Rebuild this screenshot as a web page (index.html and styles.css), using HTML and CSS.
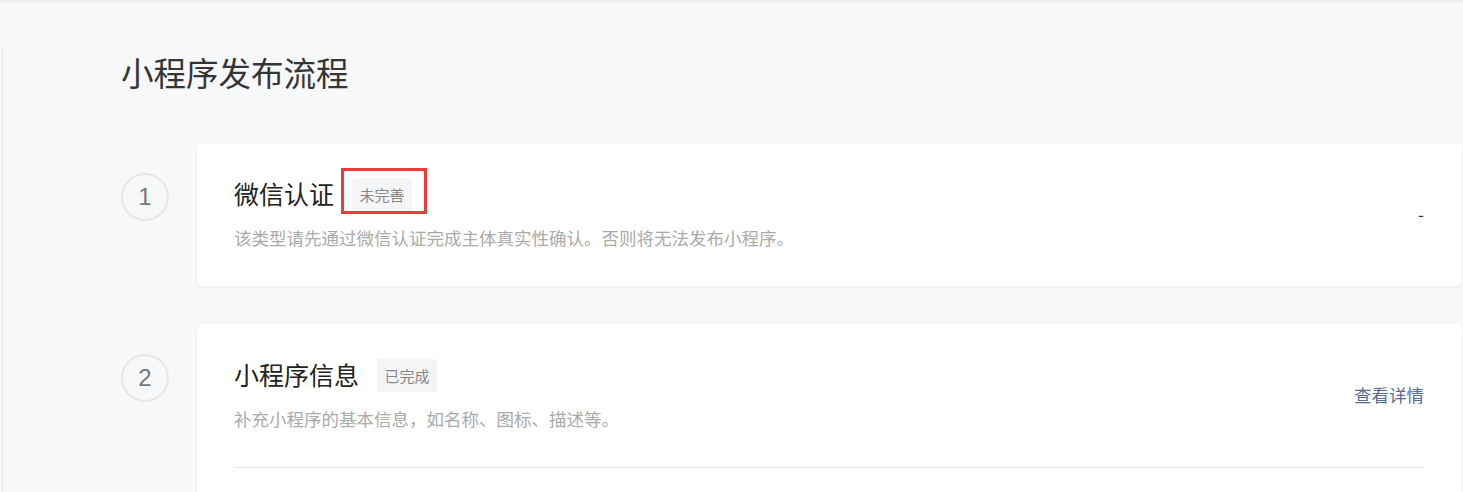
FILE: index.html
```html
<!DOCTYPE html>
<html lang="zh-CN">

<head>
    <meta charset="UTF-8">
    <meta name="viewport" content="width=device-width, initial-scale=1.0">
    <title>小程序发布流程</title>
    <link rel="stylesheet" href="styles.css">
</head>

<body>
    <div class="topbar"></div>

    <div class="main">
        <h1 class="page-title">小程序发布流程</h1>

        <div class="step">
            <div class="step-num">1</div>
            <div class="step-card">
                <div class="step-head">
                    <div class="step-info">
                        <div class="step-title-row">
                            <span class="step-title">微信认证</span>
                            <span class="tag-wrap marked"><span class="tag">未完善</span></span>
                        </div>
                        <p class="step-desc">该类型请先通过微信认证完成主体真实性确认。否则将无法发布小程序。</p>
                    </div>
                    <div class="step-action">-</div>
                </div>
            </div>
        </div>

        <div class="step">
            <div class="step-num">2</div>
            <div class="step-card">
                <div class="step-head">
                    <div class="step-info">
                        <div class="step-title-row">
                            <span class="step-title">小程序信息</span>
                            <span class="tag-wrap"><span class="tag">已完成</span></span>
                        </div>
                        <p class="step-desc">补充小程序的基本信息，如名称、图标、描述等。</p>
                    </div>
                    <a class="step-link" href="#">查看详情</a>
                </div>
                <div class="step-sub"></div>
            </div>
        </div>
    </div>
</body>

</html>
```

FILE: styles.css
```css
body {
    font-family: "Noto Sans CJK SC", "Noto Sans", sans-serif;
    background-color: #f7f8fa;
    margin: 0;
    padding: 0;
    overflow: hidden;
}

.topbar {
    height: 3px;
    background-color: #eff0f2;
}

.main {
    margin-top: 44px;
    margin-left: 2px;
    border-left: 1px solid #e3e4e6;
    padding: 2px 1px 0 118px;
    min-height: 600px;
}

.page-title {
    margin: 0 0 49px;
    font-size: 32.5px;
    font-weight: normal;
    line-height: 45px;
    color: #353535;
}

.step {
    display: flex;
    gap: 28px;
    margin-bottom: 38px;
}

.step-num {
    flex: none;
    width: 44px;
    height: 44px;
    margin-top: 30px;
    border: 2px solid #e7e7e7;
    border-radius: 50%;
    text-align: center;
    line-height: 44px;
    font-family: "Liberation Sans", Arial, sans-serif;
    font-size: 24px;
    color: #777;
}

.step-card {
    flex: 1;
    background-color: #fff;
    border-radius: 5px;
    box-shadow: 0 1px 3px rgba(0, 0, 0, 0.07);
    padding: 0 38px 0 37px;
}

.step-head {
    display: flex;
    justify-content: space-between;
    align-items: center;
    padding: 33px 0 36px;
}

.step-title-row {
    display: flex;
    align-items: center;
    height: 34px;
}

.step-title {
    font-size: 25px;
    line-height: 34px;
    color: #222;
}

.tag-wrap {
    position: relative;
    margin-left: 18px;
    display: flex;
}

.tag {
    display: inline-block;
    height: 33px;
    line-height: 33px;
    padding: 0 7.5px;
    font-size: 15px;
    color: #888;
    background-color: #f4f5f7;
    border-radius: 2px;
    margin-top: 3px;
}

.marked::after {
    content: "";
    position: absolute;
    top: -7px;
    left: -11px;
    right: -15px;
    bottom: -3px;
    border: 3px solid #f03a3a;
}

.step-desc {
    margin: 16px 0 0;
    font-size: 17.5px;
    line-height: 24px;
    color: #aaa;
}

.step-action {
    font-size: 17px;
    color: #333;
}

.step-link {
    font-size: 17.5px;
    color: #576b95;
    text-decoration: none;
}

.step-sub {
    border-top: 1px solid #e5e5e5;
    height: 80px;
}
```
